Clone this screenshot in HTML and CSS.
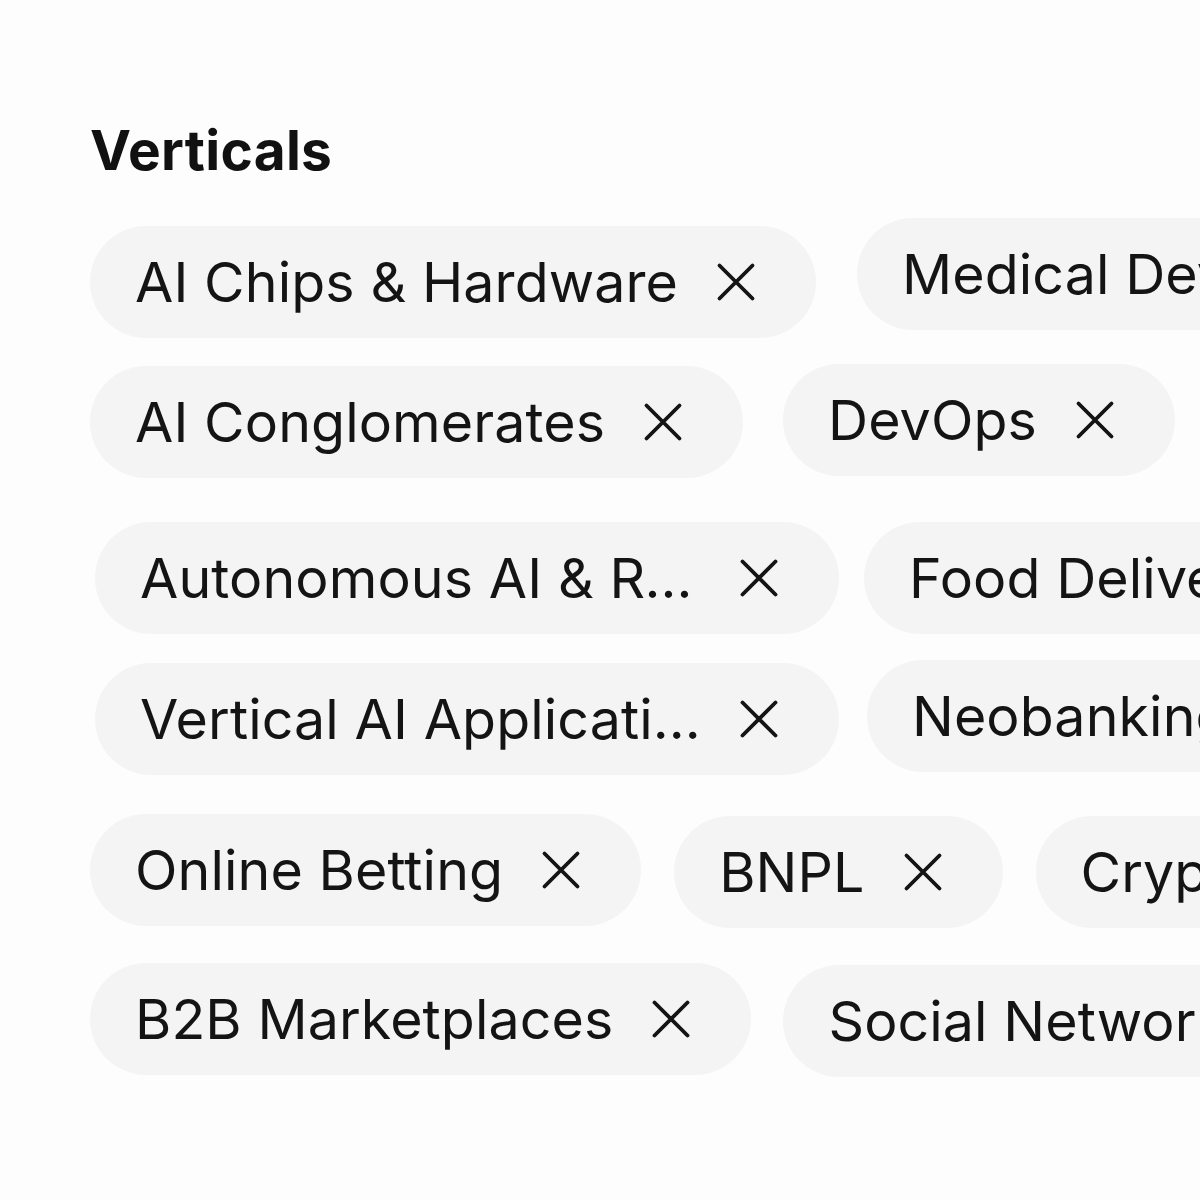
FILE: index.html
```html
<!DOCTYPE html>
<html lang="en">
<head>
<meta charset="utf-8">
<title>Verticals</title>
<link rel="stylesheet" href="styles.css">
</head>
<body>
<main class="page">
  <h2 class="title">Verticals</h2>

  <div class="row row-1">
    <span class="chip nudge-8"><span class="chip-label">AI Chips &amp; Hardware</span><svg class="x" viewBox="0 0 24 24"><path d="M3 3L21 21M21 3L3 21"/></svg></span>
    <span class="chip"><span class="chip-label">Medical Devices</span><svg class="x" viewBox="0 0 24 24"><path d="M3 3L21 21M21 3L3 21"/></svg></span>
  </div>

  <div class="row row-2">
    <span class="chip nudge-2"><span class="chip-label">AI Conglomerates</span><svg class="x" viewBox="0 0 24 24"><path d="M3 3L21 21M21 3L3 21"/></svg></span>
    <span class="chip"><span class="chip-label">DevOps</span><svg class="x" viewBox="0 0 24 24"><path d="M3 3L21 21M21 3L3 21"/></svg></span>
  </div>

  <div class="row row-3">
    <span class="chip"><span class="chip-label clamp">Autonomous AI &amp; Robotics</span><svg class="x" viewBox="0 0 24 24"><path d="M3 3L21 21M21 3L3 21"/></svg></span>
    <span class="chip"><span class="chip-label">Food Delivery</span><svg class="x" viewBox="0 0 24 24"><path d="M3 3L21 21M21 3L3 21"/></svg></span>
  </div>

  <div class="row row-4">
    <span class="chip nudge-3"><span class="chip-label clamp">Vertical AI Applications</span><svg class="x" viewBox="0 0 24 24"><path d="M3 3L21 21M21 3L3 21"/></svg></span>
    <span class="chip"><span class="chip-label">Neobanking</span><svg class="x" viewBox="0 0 24 24"><path d="M3 3L21 21M21 3L3 21"/></svg></span>
  </div>

  <div class="row row-5">
    <span class="chip"><span class="chip-label">Online Betting</span><svg class="x" viewBox="0 0 24 24"><path d="M3 3L21 21M21 3L3 21"/></svg></span>
    <span class="chip nudge-2"><span class="chip-label">BNPL</span><svg class="x" viewBox="0 0 24 24"><path d="M3 3L21 21M21 3L3 21"/></svg></span>
    <span class="chip nudge-2"><span class="chip-label">Crypto</span><svg class="x" viewBox="0 0 24 24"><path d="M3 3L21 21M21 3L3 21"/></svg></span>
  </div>

  <div class="row row-6">
    <span class="chip"><span class="chip-label">B2B Marketplaces</span><svg class="x" viewBox="0 0 24 24"><path d="M3 3L21 21M21 3L3 21"/></svg></span>
    <span class="chip nudge-2"><span class="chip-label">Social Networks</span><svg class="x" viewBox="0 0 24 24"><path d="M3 3L21 21M21 3L3 21"/></svg></span>
  </div>
</main>
</body>
</html>
```

FILE: styles.css
```css
html, body {
  margin: 0;
  padding: 0;
  background: #fdfdfd;
}

body {
  width: 1200px;
  height: 1200px;
  overflow: hidden;
  font-family: Inter, "Noto Sans", "Liberation Sans", sans-serif;
  color: #141414;
}

.page {
  padding: 118px 0 0 90px;
}

.title {
  margin: 0;
  font-size: 55px;
  font-weight: 700;
  line-height: 64px;
  letter-spacing: 0.3px;
  color: #111;
}

.row {
  display: flex;
  flex-wrap: nowrap;
  align-items: flex-start;
  white-space: nowrap;
}

.row-1 { margin-top: 36px; gap: 41px; }
.row-2 { margin-top: 26px; gap: 40px; }
.row-3 { margin-top: 44px; gap: 25px; padding-left: 5px; }
.row-4 { margin-top: 26px; gap: 28px; padding-left: 5px; }
.row-5 { margin-top: 39px; gap: 33px; }
.row-6 { margin-top: 35px; gap: 32px; }

.chip {
  flex: none;
  display: inline-flex;
  align-items: center;
  height: 112px;
  padding: 0 58px 0 45px;
  border-radius: 56px;
  background: #f4f4f4;
  box-sizing: border-box;
}

.nudge-2 { margin-top: 2px; }
.nudge-3 { margin-top: 3px; }
.nudge-8 { margin-top: 8px; }

.chip-label {
  font-size: 55.5px;
  line-height: 64px;
  font-weight: 400;
  letter-spacing: 0.1px;
}

.chip-label.clamp {
  display: inline-block;
  max-width: 564px;
  overflow: hidden;
  text-overflow: ellipsis;
}

.x {
  flex: none;
  width: 44px;
  height: 44px;
  margin-left: 36px;
  fill: none;
  stroke: #141414;
  stroke-width: 2.1;
  stroke-linecap: round;
}

.clamp + .x {
  margin-left: 33px;
}
```
